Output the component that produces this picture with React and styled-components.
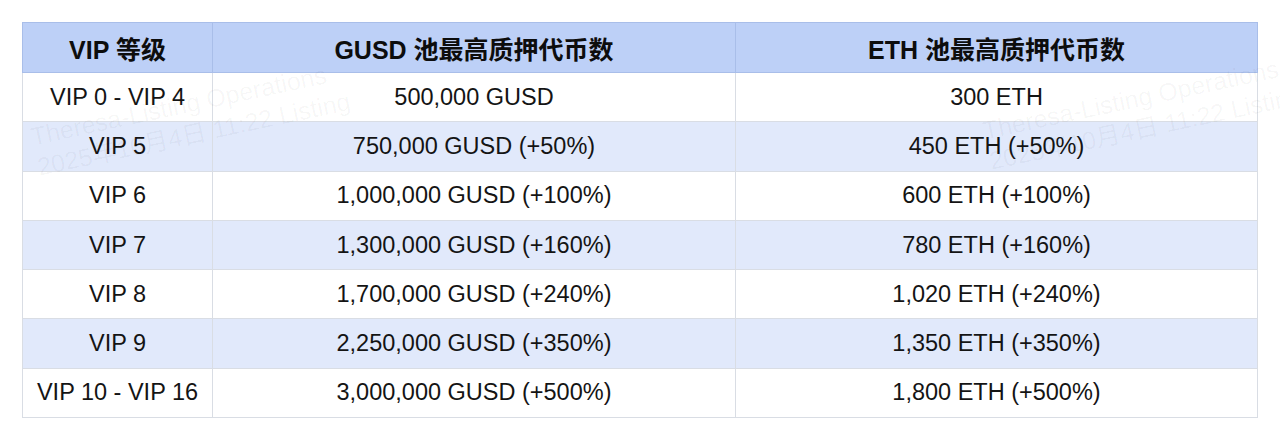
import React from "react";
import styled, { createGlobalStyle } from "styled-components";

const GlobalStyle = createGlobalStyle`
  html, body {
    margin: 0;
    padding: 0;
    background: #ffffff;
  }
  body {
    font-family: "Liberation Sans", Arial, "Noto Sans CJK SC", sans-serif;
    color: #111111;
  }
`;

const Page = styled.div`
  position: relative;
  width: 1280px;
  height: 440px;
  padding: 22px 23px 0 22px;
  box-sizing: border-box;
  overflow: hidden;
`;

const Table = styled.table`
  width: 1235px;
  border-collapse: collapse;
  table-layout: fixed;
`;

const HeadCell = styled.th`
  height: 49px;
  padding: 0;
  background: #bdd0f7;
  border: 1px solid #a9bee9;
  font-size: 25px;
  font-weight: 700;
  text-align: center;
  color: #0d0d0d;
`;

const Row = styled.tr`
  background: ${props => (props.striped ? "#e1e9fb" : "#ffffff")};
`;

const Cell = styled.td`
  height: 48.3px;
  padding: 0;
  border: 1px solid #d9dde4;
  font-size: 23.5px;
  text-align: center;
  color: #141414;
`;

// faint rotated watermark sitting over the table
const Watermark = styled.div`
  position: absolute;
  left: ${props => props.left}px;
  top: ${props => props.top}px;
  transform: rotate(-12deg);
  transform-origin: left top;
  font-size: 25px;
  line-height: 31px;
  color: rgba(0, 0, 0, 0.04);
  white-space: nowrap;
  pointer-events: none;
`;

const rows = [
  ["VIP 0 - VIP 4", "500,000 GUSD", "300 ETH"],
  ["VIP 5", "750,000 GUSD (+50%)", "450 ETH (+50%)"],
  ["VIP 6", "1,000,000 GUSD (+100%)", "600 ETH (+100%)"],
  ["VIP 7", "1,300,000 GUSD (+160%)", "780 ETH (+160%)"],
  ["VIP 8", "1,700,000 GUSD (+240%)", "1,020 ETH (+240%)"],
  ["VIP 9", "2,250,000 GUSD (+350%)", "1,350 ETH (+350%)"],
  ["VIP 10 - VIP 16", "3,000,000 GUSD (+500%)", "1,800 ETH (+500%)"],
];

export default function App() {
  return (
    <>
      <GlobalStyle />
      <Page>
        <Table>
          <colgroup>
            <col style={{ width: 190 }} />
            <col style={{ width: 523 }} />
            <col style={{ width: 522 }} />
          </colgroup>
          <thead>
            <tr>
              <HeadCell>VIP 等级</HeadCell>
              <HeadCell>GUSD 池最高质押代币数</HeadCell>
              <HeadCell>ETH 池最高质押代币数</HeadCell>
            </tr>
          </thead>
          <tbody>
            {rows.map((r, i) => (
              <Row key={i} striped={i % 2 === 1}>
                <Cell>{r[0]}</Cell>
                <Cell>{r[1]}</Cell>
                <Cell>{r[2]}</Cell>
              </Row>
            ))}
          </tbody>
        </Table>
        <Watermark left={28} top={122}>
          Theresa-Listing Operations
          <br />
          2025年10月4日 11:22 Listing
        </Watermark>
        <Watermark left={980} top={116}>
          Theresa-Listing Operations
          <br />
          2025年10月4日 11:22 Listing
        </Watermark>
      </Page>
    </>
  );
}
